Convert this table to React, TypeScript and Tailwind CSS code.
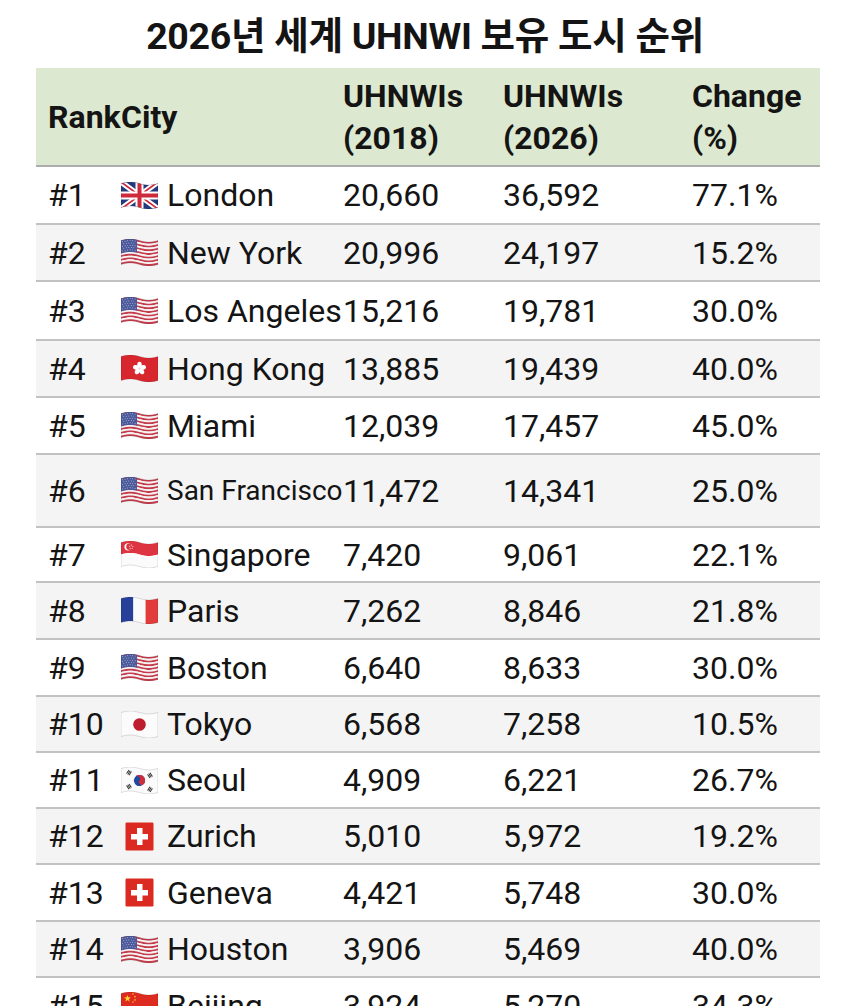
import { useId } from 'react';

// flag drawing helpers: every flag is a 37x27 waving band like the emoji set
const W = 37;
const wave = (x: number) => 1.5 - 1.5 * Math.sin((2 * Math.PI * x) / W);

function band(y0: number, y1: number, x0 = 0, x1 = W) {
  const steps = 14;
  const top: string[] = [];
  const bottom: string[] = [];
  for (let i = 0; i <= steps; i++) {
    const x = x0 + ((x1 - x0) * i) / steps;
    top.push(`${x.toFixed(2)},${(y0 + wave(x)).toFixed(2)}`);
    bottom.unshift(`${x.toFixed(2)},${(y1 + wave(x)).toFixed(2)}`);
  }
  return `M${top.join('L')}L${bottom.join('L')}Z`;
}

function starPoints(cx: number, cy: number, r: number, rot = 0) {
  const pts: string[] = [];
  for (let i = 0; i < 10; i++) {
    const rr = i % 2 === 0 ? r : r * 0.4;
    const a = (Math.PI / 5) * i - Math.PI / 2 + rot;
    pts.push(`${(cx + rr * Math.cos(a)).toFixed(2)},${(cy + rr * Math.sin(a)).toFixed(2)}`);
  }
  return pts.join(' ');
}

const OUTLINE = band(0, 24);

function Outline() {
  return <path d={OUTLINE} fill="none" stroke="rgba(0,0,0,0.18)" strokeWidth={0.7} />;
}

function FlagFrame({ children }: { children: React.ReactNode }) {
  return (
    <svg width={37} height={27} viewBox="0 0 37 27" className="shrink-0">
      {children}
    </svg>
  );
}

function FlagGB() {
  const id = useId();
  return (
    <FlagFrame>
      <defs>
        <clipPath id={id}>
          <path d={OUTLINE} />
        </clipPath>
      </defs>
      <g clipPath={`url(#${id})`}>
        <rect x={0} y={0} width={37} height={27} fill="#233a7d" />
        <path d="M0,0 L37,27 M37,0 L0,27" stroke="#fff" strokeWidth={5.5} />
        <path d="M0,0 L37,27 M37,0 L0,27" stroke="#cf2a3c" strokeWidth={1.8} />
        <rect x={0} y={9.5} width={37} height={8} fill="#fff" />
        <rect x={14.5} y={0} width={8} height={27} fill="#fff" />
        <rect x={0} y={11.5} width={37} height={4} fill="#cf2a3c" />
        <rect x={16.5} y={0} width={4} height={27} fill="#cf2a3c" />
      </g>
      <Outline />
    </FlagFrame>
  );
}

function FlagUS() {
  const h = 24 / 13;
  const stars: [number, number][] = [];
  for (let r = 0; r < 5; r++) {
    for (let c = 0; c < 6; c++) {
      const cx = 1.6 + c * 2.5 + (r % 2) * 1.2;
      if (cx > 15) continue;
      stars.push([cx, 1.6 + r * 2.3]);
    }
  }
  return (
    <FlagFrame>
      {Array.from({ length: 13 }).map((_, i) => (
        <path key={i} d={band(i * h, (i + 1) * h)} fill={i % 2 === 0 ? '#c43c4c' : '#f6f2f2'} />
      ))}
      <path d={band(0, 7 * h, 0, 16)} fill="#4c5a9c" />
      {stars.map(([x, y], i) => (
        <circle key={i} cx={x} cy={y + wave(x)} r={0.45} fill="#e9ecf6" />
      ))}
      <Outline />
    </FlagFrame>
  );
}

function FlagHK() {
  const cx = 18.5;
  const cy = 12 + wave(18.5);
  return (
    <FlagFrame>
      <path d={OUTLINE} fill="#d8262f" />
      {[0, 1, 2, 3, 4].map((k) => (
        <ellipse
          key={k}
          cx={cx}
          cy={cy - 3.3}
          rx={2.3}
          ry={3.4}
          fill="#fff"
          transform={`rotate(${k * 72} ${cx} ${cy})`}
        />
      ))}
      <circle cx={cx} cy={cy} r={1} fill="#f3c8c8" />
      <Outline />
    </FlagFrame>
  );
}

function FlagSG() {
  const cy = 5.8;
  return (
    <FlagFrame>
      <path d={band(0, 12)} fill="#de3340" />
      <path d={band(12, 24)} fill="#fbfbfb" />
      <circle cx={7} cy={cy} r={3.6} fill="#fff" />
      <circle cx={8.4} cy={cy} r={3.2} fill="#de3340" />
      {[0, 1, 2, 3, 4].map((k) => {
        const a = (k * 72 - 90) * (Math.PI / 180);
        return <circle key={k} cx={10.2 + 1.7 * Math.cos(a)} cy={cy + 1.7 * Math.sin(a)} r={0.55} fill="#fff" />;
      })}
      <Outline />
    </FlagFrame>
  );
}

function FlagFR() {
  return (
    <FlagFrame>
      <path d={band(0, 24, 0, 12.4)} fill="#27409a" />
      <path d={band(0, 24, 12.3, 24.7)} fill="#fafafa" />
      <path d={band(0, 24, 24.6, 37)} fill="#e23b3b" />
      <Outline />
    </FlagFrame>
  );
}

function FlagJP() {
  return (
    <FlagFrame>
      <path d={OUTLINE} fill="#fbfbfb" />
      <circle cx={18.5} cy={12 + wave(18.5)} r={6.3} fill="#bd1d2d" />
      <Outline />
    </FlagFrame>
  );
}

function Trigram({ x, y, rot }: { x: number; y: number; rot: number }) {
  return (
    <g transform={`translate(${x} ${y}) rotate(${rot})`}>
      <rect x={-2.2} y={-1.9} width={4.4} height={0.9} fill="#222" />
      <rect x={-2.2} y={-0.45} width={4.4} height={0.9} fill="#222" />
      <rect x={-2.2} y={1} width={4.4} height={0.9} fill="#222" />
    </g>
  );
}

function FlagKR() {
  const cy = 12 + wave(18.5);
  return (
    <FlagFrame>
      <path d={OUTLINE} fill="#fbfbfb" />
      <g transform={`translate(18.5 ${cy}) rotate(33.7) scale(5.6)`}>
        <circle r={1} fill="#1d4aa0" />
        <path d="M-1,0 A1,1 0 0,1 1,0 A0.5,0.5 0 0,1 0,0 A0.5,0.5 0 0,0 -1,0 Z" fill="#cd2e3a" />
      </g>
      <Trigram x={8} y={5.6} rot={-56} />
      <Trigram x={29} y={8.4} rot={56} />
      <Trigram x={8} y={19.6} rot={56} />
      <Trigram x={29} y={22.4} rot={-56} />
      <Outline />
    </FlagFrame>
  );
}

function FlagCH() {
  return (
    <svg width={37} height={29} viewBox="0 0 37 29" className="shrink-0">
      <rect x={4.5} y={0.5} width={28} height={28} rx={1.2} fill="#da2a22" />
      <rect x={16} y={6} width={5.5} height={17} fill="#fff" />
      <rect x={10} y={12} width={17} height={5.5} fill="#fff" />
    </svg>
  );
}

function FlagCN() {
  const small: [number, number][] = [
    [12, 2.4],
    [14, 4.8],
    [14, 8],
    [12, 10.4],
  ];
  return (
    <FlagFrame>
      <path d={OUTLINE} fill="#de2b1f" />
      <polygon points={starPoints(6.5, 6.5, 3.6)} fill="#ffd928" />
      {small.map(([x, y], i) => (
        <polygon key={i} points={starPoints(x, y + wave(x) - 0.5, 1.2)} fill="#ffd928" />
      ))}
      <Outline />
    </FlagFrame>
  );
}

const flags: Record<string, () => React.ReactElement> = {
  GB: FlagGB,
  US: FlagUS,
  HK: FlagHK,
  SG: FlagSG,
  FR: FlagFR,
  JP: FlagJP,
  KR: FlagKR,
  CH: FlagCH,
  CN: FlagCN,
};

interface CityRow {
  rank: number;
  city: string;
  flag: string;
  y2018: string;
  y2026: string;
  change: string;
  height: number;
}

const rows: CityRow[] = [
  { rank: 1, city: 'London', flag: 'GB', y2018: '20,660', y2026: '36,592', change: '77.1%', height: 58 },
  { rank: 2, city: 'New York', flag: 'US', y2018: '20,996', y2026: '24,197', change: '15.2%', height: 57 },
  { rank: 3, city: 'Los Angeles', flag: 'US', y2018: '15,216', y2026: '19,781', change: '30.0%', height: 59 },
  { rank: 4, city: 'Hong Kong', flag: 'HK', y2018: '13,885', y2026: '19,439', change: '40.0%', height: 57 },
  { rank: 5, city: 'Miami', flag: 'US', y2018: '12,039', y2026: '17,457', change: '45.0%', height: 57 },
  { rank: 6, city: 'San Francisco', flag: 'US', y2018: '11,472', y2026: '14,341', change: '25.0%', height: 73 },
  { rank: 7, city: 'Singapore', flag: 'SG', y2018: '7,420', y2026: '9,061', change: '22.1%', height: 55 },
  { rank: 8, city: 'Paris', flag: 'FR', y2018: '7,262', y2026: '8,846', change: '21.8%', height: 57 },
  { rank: 9, city: 'Boston', flag: 'US', y2018: '6,640', y2026: '8,633', change: '30.0%', height: 57 },
  { rank: 10, city: 'Tokyo', flag: 'JP', y2018: '6,568', y2026: '7,258', change: '10.5%', height: 56 },
  { rank: 11, city: 'Seoul', flag: 'KR', y2018: '4,909', y2026: '6,221', change: '26.7%', height: 56 },
  { rank: 12, city: 'Zurich', flag: 'CH', y2018: '5,010', y2026: '5,972', change: '19.2%', height: 56 },
  { rank: 13, city: 'Geneva', flag: 'CH', y2018: '4,421', y2026: '5,748', change: '30.0%', height: 57 },
  { rank: 14, city: 'Houston', flag: 'US', y2018: '3,906', y2026: '5,469', change: '40.0%', height: 56 },
  { rank: 15, city: 'Beijing', flag: 'CN', y2018: '3,924', y2026: '5,270', change: '34.3%', height: 57 },
];

const cols = 'grid grid-cols-[85px_222px_160px_189px_128px]';

export default function App() {
  return (
    <div
      className="w-[850px] min-h-[1006px] bg-white text-[#141414]"
      style={{ fontFamily: 'Roboto, "Noto Sans CJK KR", sans-serif' }}
    >
      {/* Titre */}
      <div className="h-[68px] flex items-center justify-center pt-[6px]">
        <h1 className="text-[37.5px] font-bold leading-none tracking-[-0.3px]">2026년 세계 UHNWI 보유 도시 순위</h1>
      </div>

      <div className="mx-[36px] w-[784px]">
        {/* En-tête */}
        <div className={`${cols} h-[99px] items-center bg-[#dce8cf] border-b-2 border-[#acacac] text-[32px] font-bold leading-[42px]`}>
          <div className="pl-[12px] whitespace-nowrap">Rank</div>
          <div>City</div>
          <div>
            UHNWIs
            <br />
            (2018)
          </div>
          <div>
            UHNWIs
            <br />
            (2026)
          </div>
          <div>
            Change
            <br />
            (%)
          </div>
        </div>

        {/* Lignes */}
        {rows.map((row, i) => {
          const Flag = flags[row.flag];
          return (
            <div
              key={row.rank}
              className={`${cols} items-center border-b-2 border-[#c2c2c2] text-[32px] leading-none ${
                i % 2 === 1 ? 'bg-[#f4f4f4]' : 'bg-white'
              }`}
              style={{ height: row.height }}
            >
              <div className="pl-[12px]">#{row.rank}</div>
              <div className="flex items-center gap-[9px] whitespace-nowrap">
                <Flag />
                <span className={row.city === 'San Francisco' ? 'text-[28px]' : ''}>{row.city}</span>
              </div>
              <div>{row.y2018}</div>
              <div>{row.y2026}</div>
              <div>{row.change}</div>
            </div>
          );
        })}
      </div>
    </div>
  );
}
